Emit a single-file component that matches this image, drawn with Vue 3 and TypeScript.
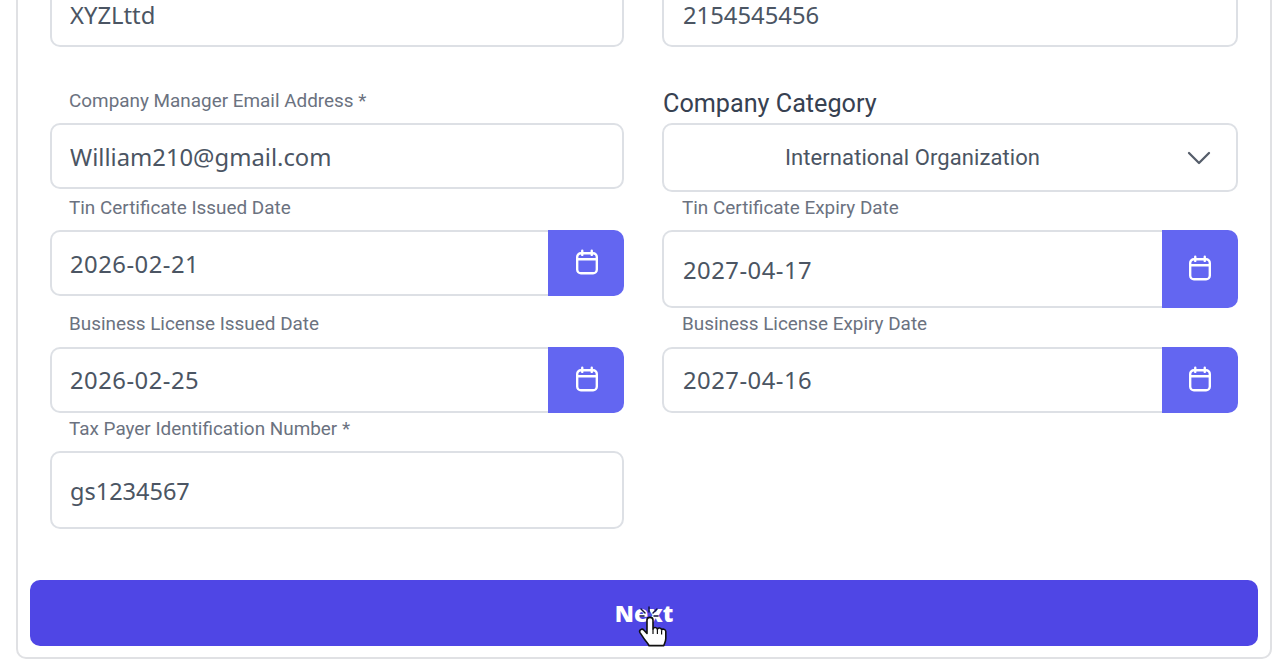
<template>
  <div class="page">
    <form class="card" @submit.prevent>
      <div class="grid">
        <div class="field first">
          <input v-model="form.companyName" class="text-input" type="text" />
        </div>
        <div class="field first">
          <input v-model="form.phone" class="text-input" type="text" />
        </div>

        <div class="field row-two">
          <label class="small-label">Company Manager Email Address *</label>
          <input v-model="form.email" class="text-input" type="text" />
        </div>
        <div class="field row-two">
          <label class="big-label">Company Category</label>
          <div class="select-box">
            <span class="select-text">{{ form.category }}</span>
            <svg class="chevron" viewBox="0 0 24 14" fill="none" stroke="#565e6b" stroke-width="2.3" stroke-linecap="round" stroke-linejoin="round">
              <path d="M2 2l10 10L22 2" />
            </svg>
          </div>
        </div>

        <div v-for="d in dateFields" :key="d.label" class="field" :class="{ 'row-four': d.rowFour }">
          <label class="small-label">{{ d.label }}</label>
          <div class="date-group" :class="{ tall: d.tall }">
            <input v-model="d.value" class="date-input" type="text" />
            <button class="date-btn" type="button">
              <svg class="cal" width="30" height="30" viewBox="0 0 24 24" fill="none" stroke="#fff" stroke-width="1.9" stroke-linecap="round" stroke-linejoin="round">
                <rect x="4.150" y="4.200" width="15.700" height="16" rx="3" />
                <path d="M8.200 2.200v3.300M15.800 2.200v3.300M4.150 9h15.700" />
              </svg>
            </button>
          </div>
        </div>

        <div class="field">
          <label class="small-label">Tax Payer Identification Number *</label>
          <input v-model="form.tin" class="text-input tall" type="text" />
        </div>
      </div>

      <button class="next-btn" type="submit">Next</button>

      <!-- recorded mouse pointer with click effect -->
      <svg class="cursor" width="34" height="46" viewBox="0 0 34 46">
        <g stroke="#14143c" stroke-width="1.5" stroke-linecap="round">
          <path d="M13 3v5M5 5l4 4M21 5l-4 4M4 12h4M22 12h-4" />
        </g>
        <path d="M11 16c0-3.500 6-3.500 6 0v9c.4-2 4-2 4.400.4.400-2 4-1.800 4.200.6.600-1.600 4.200-1 4.200 1.600v7c0 2.500-1 4-2 7H13c-1-2.500-3-4-5-7l-4-6c-1.400-2.600 2-4.600 4-2.400l3 3.200z" fill="#fff" stroke="#111" stroke-width="1.600" stroke-linejoin="round" />
        <path d="M17 25v5M21.400 26v4M25.600 26.500v4" stroke="#111" stroke-width="1.200" fill="none" />
      </svg>
    </form>
  </div>
</template>

<script setup lang="ts">
import { reactive } from "vue";

const form = reactive({
  companyName: "XYZLttd",
  phone: "2154545456",
  email: "William210@gmail.com",
  category: "International Organization",
  tin: "gs1234567",
});

const dateFields = reactive([
  { label: "Tin Certificate Issued Date", value: "2026-02-21", tall: false, rowFour: false },
  { label: "Tin Certificate Expiry Date", value: "2027-04-17", tall: true, rowFour: false },
  { label: "Business License Issued Date", value: "2026-02-25", tall: false, rowFour: true },
  { label: "Business License Expiry Date", value: "2027-04-16", tall: false, rowFour: true },
]);
</script>

<style>
html,
body {
  margin: 0;
  background: #fff;
  overflow: hidden;
}
</style>

<style scoped>
.page {
  height: 660px;
  overflow: hidden;
  padding: 0 8px 0 16px;
  box-sizing: border-box;
  font-family: "Noto Sans", sans-serif;
}

.card {
  position: relative;
  margin-top: -42px;
  height: 701px;
  box-sizing: border-box;
  border: 2px solid #e0e1e4;
  border-radius: 10px;
  padding: 0 12px;
}

.grid {
  display: grid;
  grid-template-columns: 574px 576px;
  column-gap: 38px;
  align-items: start;
  padding: 0 20px;
}

.field {
  display: flex;
  flex-direction: column;
  padding-top: 38px;
}

.field.first {
  padding-top: 0;
}

.field.row-two {
  padding-top: 76px;
}

.field.row-four {
  padding-top: 39px;
}

.small-label {
  height: 20px;
  margin: -32px 0 12px 19px;
  font: 18.9px/20px Roboto, sans-serif;
  color: #6b7280;
  white-space: nowrap;
}

.row-four .small-label {
  margin-top: -33px;
  margin-bottom: 13px;
}

.field:nth-child(even) .small-label {
  margin-left: 20px;
}

.big-label {
  font: 25.2px/28px Roboto, sans-serif;
  color: #374151;
  margin: -33px 0 5px 1px;
  white-space: nowrap;
}

.text-input,
.date-input {
  height: 66px;
  box-sizing: border-box;
  width: 100%;
  border: 2px solid #dde0e5;
  border-radius: 10px;
  padding: 2px 18px 0;
  background: #fff;
  font: 23.8px "Noto Sans", sans-serif;
  color: #4b5563;
  outline: none;
}

.field:nth-child(even) .text-input,
.field:nth-child(even) .date-input {
  padding-left: 19px;
}

.first .text-input {
  height: 87px;
  padding-top: 22px;
}

.text-input.tall {
  height: 78px;
  font-size: 23.5px;
}

.select-box {
  height: 69px;
  box-sizing: border-box;
  border: 2px solid #dde0e5;
  border-radius: 10px;
  display: flex;
  align-items: center;
  justify-content: space-between;
  padding: 0 25px 0 121px;
}

.select-text {
  font: 22px Roboto, sans-serif;
  color: #4b5563;
  letter-spacing: 0.08px;
}

.chevron {
  width: 24px;
  height: 14px;
}

.date-group {
  display: flex;
  height: 66px;
}

.date-group.tall {
  height: 78px;
}

.date-input {
  flex: 1;
  min-width: 0;
  height: 100%;
  border-right: none;
  border-radius: 10px 0 0 10px;
  letter-spacing: 0.5px;
}

.row-four .date-input {
  padding-top: 0;
}

.date-btn {
  width: 76px;
  border: none;
  padding: 0;
  background: #6366f1;
  border-radius: 0 10px 10px 0;
  display: flex;
  align-items: center;
  justify-content: center;
}

.cal {
  margin-left: 2px;
}

.field:nth-child(even) .cal {
  margin-left: 0;
}

.next-btn {
  display: block;
  width: 1228px;
  height: 66px;
  margin-top: 51px;
  border: none;
  border-radius: 10px;
  background: #4f46e5;
  color: #fff;
  font: 800 23px "Open Sans", sans-serif;
}

.cursor {
  position: absolute;
  left: 618px;
  top: 644px;
}
</style>
